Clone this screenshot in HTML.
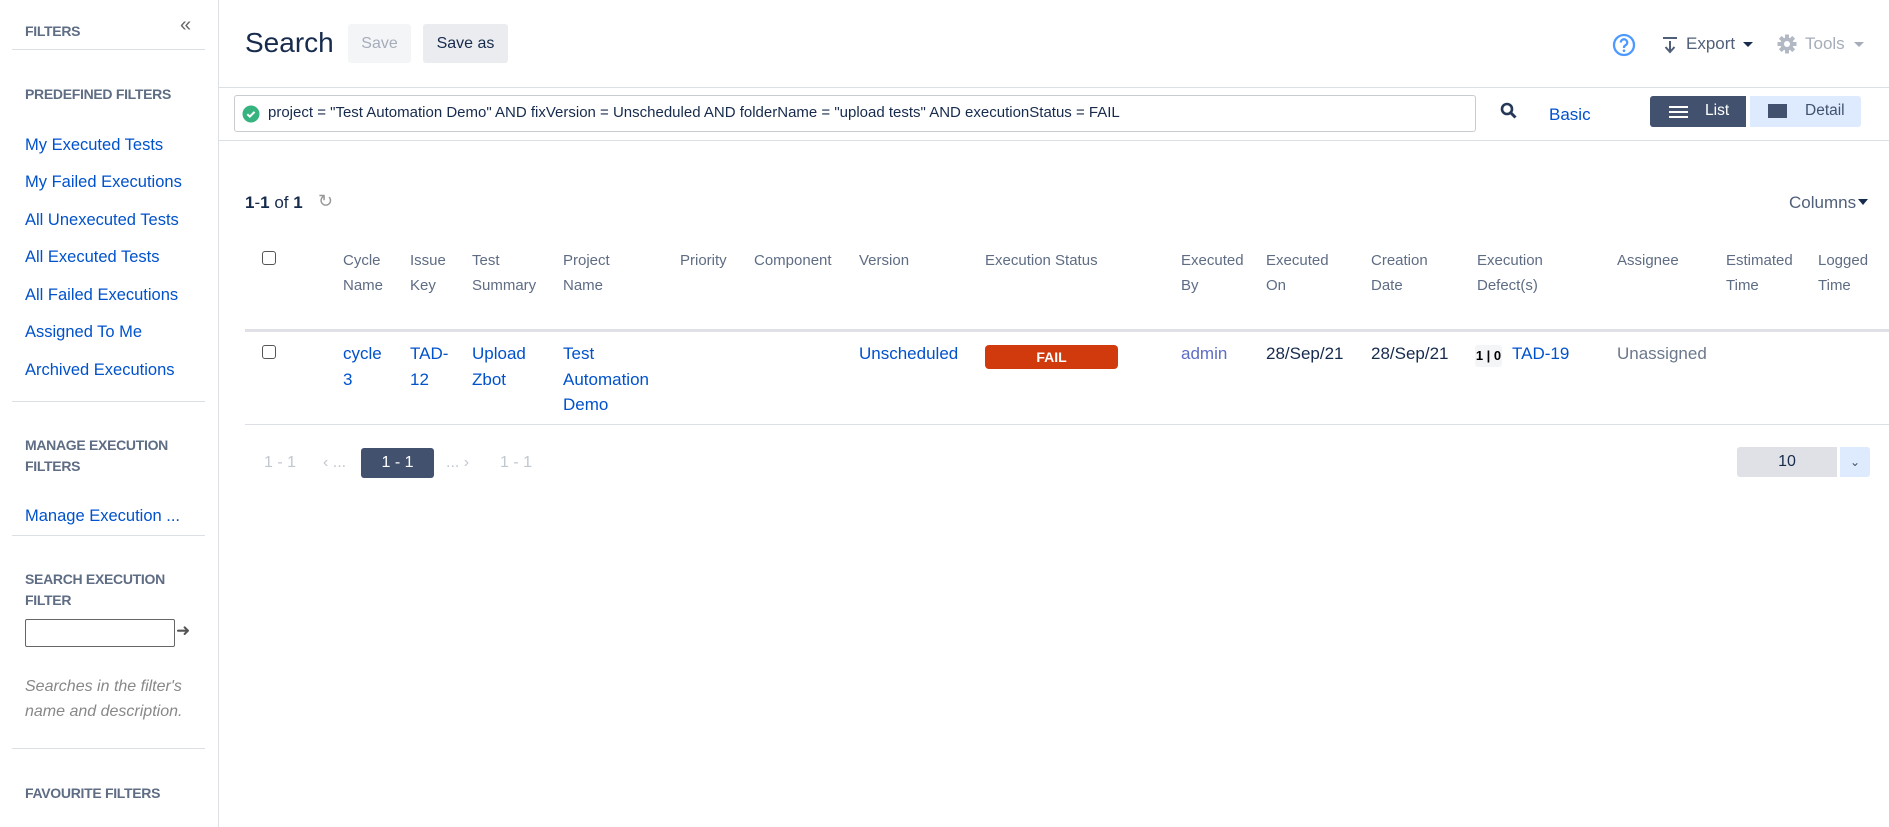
<!DOCTYPE html>
<html><head><meta charset="utf-8"><style>
*{margin:0;padding:0;box-sizing:border-box}
body{width:1889px;height:827px;background:#fff;font-family:"Liberation Sans",Arial,sans-serif;position:relative;overflow:hidden;color:#172b4d}
.a{position:absolute;white-space:nowrap}
.sh{font-size:14px;color:#5e6c84;text-transform:uppercase;line-height:21px;font-weight:bold;letter-spacing:-0.3px}
.lk{font-size:16.5px;color:#0052cc}
.hl{position:absolute;height:1px;background:#dcdfe4}
.th{position:absolute;top:248px;font-size:15px;color:#5e6c84;line-height:25px}
.td{position:absolute;top:341px;font-size:17px;color:#0052cc;line-height:25.5px}
.cb{position:absolute;width:14px;height:14px;border:1.5px solid #555;border-radius:3px}
</style></head><body>
<div class="a" style="left:218px;top:0;width:1px;height:827px;background:#dcdfe4"></div>
<div class="a sh" style="left:25px;top:21px">Filters</div>
<div class="a" style="left:180px;top:14px;font-size:20px;color:#666">«</div>
<div class="hl" style="left:12px;width:193px;top:49px"></div>
<div class="a sh" style="left:25px;top:84px">Predefined Filters</div>
<div class="a lk" style="left:25px;top:136px">My Executed Tests</div>
<div class="a lk" style="left:25px;top:173px">My Failed Executions</div>
<div class="a lk" style="left:25px;top:211px">All Unexecuted Tests</div>
<div class="a lk" style="left:25px;top:248px">All Executed Tests</div>
<div class="a lk" style="left:25px;top:286px">All Failed Executions</div>
<div class="a lk" style="left:25px;top:323px">Assigned To Me</div>
<div class="a lk" style="left:25px;top:361px">Archived Executions</div>
<div class="hl" style="left:12px;width:193px;top:401px"></div>
<div class="a sh" style="left:25px;top:435px;line-height:21px">Manage Execution<br>Filters</div>
<div class="a lk" style="left:25px;top:507px">Manage Execution ...</div>
<div class="hl" style="left:12px;width:193px;top:535px"></div>
<div class="a sh" style="left:25px;top:569px">Search Execution<br>Filter</div>
<div class="a" style="left:25px;top:619px;width:150px;height:28px;border:1px solid #666;border-radius:2px"></div>
<div class="a" style="left:176px;top:621px;font-size:17px;color:#555">&#10140;</div>
<div class="a" style="left:25px;top:674px;font-size:16px;color:#888;font-style:italic;line-height:25px">Searches in the filter's<br>name and description.</div>
<div class="hl" style="left:12px;width:193px;top:748px"></div>
<div class="a sh" style="left:25px;top:783px">Favourite Filters</div>

<div class="a" style="left:245px;top:27px;font-size:28px;color:#172b4d">Search</div>
<div class="a" style="left:348px;top:24px;width:63px;height:39px;background:#f4f5f7;border-radius:3px;color:#a5adba;font-size:16px;text-align:center;line-height:39px">Save</div>
<div class="a" style="left:423px;top:24px;width:85px;height:39px;background:#ebecf0;border-radius:3px;color:#172b4d;font-size:16px;text-align:center;line-height:39px">Save as</div>
<svg class="a" style="left:1612px;top:33px" width="24" height="24" viewBox="0 0 24 24"><circle cx="12" cy="12" r="10" fill="none" stroke="#4c9aff" stroke-width="2.3"/><path d="M8.8 9.5a3.2 3.2 0 1 1 4.5 2.9c-.9.5-1.3 1-1.3 2v.6" fill="none" stroke="#4c9aff" stroke-width="2.3"/><circle cx="12" cy="17.7" r="1.3" fill="#4c9aff"/></svg>
<svg class="a" style="left:1662px;top:36px" width="16" height="18" viewBox="0 0 16 18"><rect x="1" y="1" width="14" height="2" fill="#505f79"/><path d="M8 5v11M3.5 11l4.5 5 4.5-5" fill="none" stroke="#505f79" stroke-width="2"/></svg>
<div class="a" style="left:1686px;top:34px;font-size:17px;color:#505f79">Export</div>
<div class="a" style="left:1743px;top:42px;border-left:5px solid transparent;border-right:5px solid transparent;border-top:5px solid #172b4d"></div>
<svg class="a" style="left:1777px;top:34px" width="20" height="20" viewBox="0 0 20 20"><g fill="#b3b9c4"><circle cx="10" cy="10" r="6.5"/><rect x="8" y="0.5" width="4" height="19"/><rect x="0.5" y="8" width="19" height="4"/><rect x="8" y="0.5" width="4" height="19" transform="rotate(45 10 10)"/><rect x="8" y="0.5" width="4" height="19" transform="rotate(-45 10 10)"/></g><circle cx="10" cy="10" r="3" fill="#fff"/></svg>
<div class="a" style="left:1805px;top:34px;font-size:17px;color:#a5adba">Tools</div>
<div class="a" style="left:1854px;top:42px;border-left:5px solid transparent;border-right:5px solid transparent;border-top:5px solid #a5adba"></div>
<div class="hl" style="left:219px;right:0;top:87px"></div>

<div class="a" style="left:234px;top:95px;width:1242px;height:37px;border:1px solid #c8cbd0;border-radius:3px"></div>
<svg class="a" style="left:242px;top:105px" width="18" height="18" viewBox="0 0 18 18"><circle cx="9" cy="9" r="8.5" fill="#36b37e"/><path d="M5.3 9.2l2.5 2.4 4.8-4.8" fill="none" stroke="#fff" stroke-width="2"/></svg>
<div class="a" style="left:268px;top:104px;font-size:15px;color:#172b4d">project = "Test Automation Demo" AND fixVersion = Unscheduled AND folderName = "upload tests" AND executionStatus = FAIL</div>
<svg class="a" style="left:1500px;top:102px" width="18" height="18" viewBox="0 0 18 18"><circle cx="7" cy="7" r="5" fill="none" stroke="#253858" stroke-width="2.6"/><path d="M10.5 10.5l5 5" stroke="#253858" stroke-width="3"/></svg>
<div class="a" style="left:1549px;top:105px;font-size:17px;color:#0052cc">Basic</div>
<div class="a" style="left:1650px;top:96px;width:96px;height:31px;background:#42526e;border-radius:3px 0 0 3px"></div>
<div class="a" style="left:1669px;top:106px;width:19px;height:2px;background:#fff;box-shadow:0 5px 0 #fff,0 10px 0 #fff"></div>
<div class="a" style="left:1705px;top:102px;font-size:15.5px;color:#fff">List</div>
<div class="a" style="left:1750px;top:96px;width:111px;height:31px;background:#deebff;border-radius:0 3px 3px 0"></div>
<div class="a" style="left:1768px;top:104px;width:19px;height:14px;background:#42526e"></div>
<div class="a" style="left:1805px;top:102px;font-size:15.5px;color:#42526e">Detail</div>
<div class="hl" style="left:219px;right:0;top:140px"></div>

<div class="a" style="left:245px;top:193px;font-size:17px;color:#172b4d"><b>1</b>-<b>1</b> of <b>1</b></div>
<div class="a" style="left:318px;top:191px;font-size:18px;color:#999">&#8635;</div>
<div class="a" style="left:1789px;top:193px;font-size:17px;color:#505f79">Columns</div>
<div class="a" style="left:1858px;top:199px;border-left:5px solid transparent;border-right:5px solid transparent;border-top:6px solid #172b4d"></div>

<div class="cb" style="left:262px;top:251px"></div>
<div class="th" style="left:343px">Cycle<br>Name</div>
<div class="th" style="left:410px">Issue<br>Key</div>
<div class="th" style="left:472px">Test<br>Summary</div>
<div class="th" style="left:563px">Project<br>Name</div>
<div class="th" style="left:680px">Priority</div>
<div class="th" style="left:754px">Component</div>
<div class="th" style="left:859px">Version</div>
<div class="th" style="left:985px">Execution Status</div>
<div class="th" style="left:1181px">Executed<br>By</div>
<div class="th" style="left:1266px">Executed<br>On</div>
<div class="th" style="left:1371px">Creation<br>Date</div>
<div class="th" style="left:1477px">Execution<br>Defect(s)</div>
<div class="th" style="left:1617px">Assignee</div>
<div class="th" style="left:1726px">Estimated<br>Time</div>
<div class="th" style="left:1818px">Logged<br>Time</div>
<div class="a" style="left:245px;right:0;top:329px;height:3px;background:#dfe1e6"></div>

<div class="cb" style="left:262px;top:345px"></div>
<div class="td" style="left:343px">cycle<br>3</div>
<div class="td" style="left:410px">TAD-<br>12</div>
<div class="td" style="left:472px">Upload<br>Zbot</div>
<div class="td" style="left:563px">Test<br>Automation<br>Demo</div>
<div class="td" style="left:859px">Unscheduled</div>
<div class="a" style="left:985px;top:345px;width:133px;height:24px;background:#d13a0c;border-radius:4px;color:#fff;font-weight:bold;font-size:14px;text-align:center;line-height:24px">FAIL</div>
<div class="td" style="left:1181px;color:#5e6cc4">admin</div>
<div class="td" style="left:1266px;color:#172b4d">28/Sep/21</div>
<div class="td" style="left:1371px;color:#172b4d">28/Sep/21</div>
<div class="a" style="left:1475px;top:345px;width:27px;height:22px;background:#f4f5f7;border-radius:3px;font-size:13px;font-weight:bold;color:#000;text-align:center;line-height:22px">1 | 0</div>
<div class="td" style="left:1512px">TAD-19</div>
<div class="td" style="left:1617px;color:#6b778c">Unassigned</div>
<div class="hl" style="left:245px;right:0;top:424px"></div>

<div class="a" style="left:264px;top:454px;font-size:16px;color:#c1c7d0">1 - 1</div>
<div class="a" style="left:323px;top:454px;font-size:16px;color:#c1c7d0">‹ ...</div>
<div class="a" style="left:361px;top:448px;width:73px;height:30px;background:#42526e;border-radius:3px;color:#fff;font-size:16px;text-align:center;line-height:30px">1 - 1</div>
<div class="a" style="left:446px;top:454px;font-size:16px;color:#c1c7d0">... ›</div>
<div class="a" style="left:500px;top:454px;font-size:16px;color:#c1c7d0">1 - 1</div>
<div class="a" style="left:1737px;top:447px;width:100px;height:30px;background:#dfe1e6;border-radius:3px 0 0 3px;font-size:16px;color:#172b4d;text-align:center;line-height:30px">10</div>
<div class="a" style="left:1840px;top:447px;width:30px;height:30px;background:#deebff;border-radius:0 3px 3px 0;font-size:12px;color:#42526e;text-align:center;line-height:30px">&#8964;</div>
</body></html>
